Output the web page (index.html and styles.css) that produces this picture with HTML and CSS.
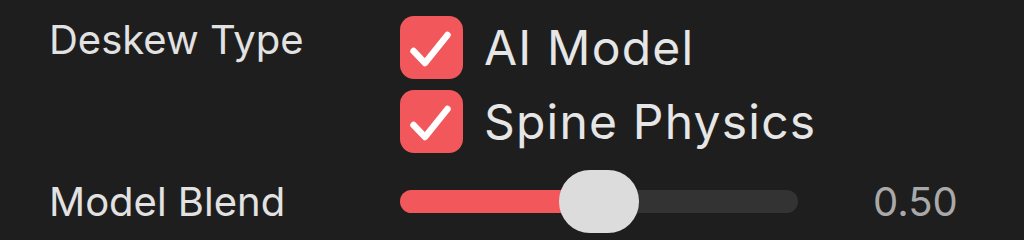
FILE: index.html
```html
<!DOCTYPE html>
<html>
<head>
<meta charset="utf-8">
<link rel="stylesheet" href="styles.css">
</head>
<body>
<div class="panel">
  <div class="row row-type">
    <div class="label">Deskew Type</div>
    <div class="checks">
      <label class="check">
        <span class="box"><svg viewBox="0 0 63 63" width="63" height="63"><path d="M13.5 35 L25 47 L47.5 19" fill="none" stroke="#fff" stroke-width="6.5" stroke-linecap="round" stroke-linejoin="round"/></svg></span>
        <span class="check-text">AI Model</span>
      </label>
      <label class="check">
        <span class="box"><svg viewBox="0 0 63 63" width="63" height="63"><path d="M13.5 35 L25 47 L47.5 19" fill="none" stroke="#fff" stroke-width="6.5" stroke-linecap="round" stroke-linejoin="round"/></svg></span>
        <span class="check-text">Spine Physics</span>
      </label>
    </div>
  </div>
  <div class="row row-blend">
    <div class="label">Model Blend</div>
    <div class="slider">
      <div class="track"><div class="fill" style="width:50%"></div></div>
      <div class="thumb" style="left:40%"></div>
    </div>
    <div class="value">0.50</div>
  </div>
</div>
</body>
</html>
```

FILE: styles.css
```css
html, body {
  margin: 0;
  padding: 0;
  background: #1e1e1e;
  width: 1024px;
  height: 240px;
  overflow: hidden;
}
.panel {
  font-family: Inter, "Liberation Sans", sans-serif;
  color: #e2e2e2;
  padding: 16px 0 0 49px;
  display: flex;
  flex-direction: column;
  gap: 17px;
}
.row {
  display: flex;
}
.label {
  width: 351px;
  flex: none;
  font-size: 40px;
  line-height: 1;
}
.row-type .label {
  padding-top: 4px;
}
.checks {
  display: flex;
  flex-direction: column;
  gap: 11px;
}
.check {
  display: flex;
  align-items: center;
  gap: 21px;
}
.box {
  width: 63px;
  height: 63px;
  border-radius: 14px;
  background: #f2575b;
  display: block;
}
.box svg { display: block; }
.check-text {
  font-size: 48px;
  line-height: 1;
  letter-spacing: 1.2px;
  color: #e6e6e6;
}
.row-blend {
  align-items: center;
}
.slider {
  position: relative;
  width: 398px;
  height: 63px;
  display: flex;
  align-items: center;
}
.track {
  width: 100%;
  height: 23px;
  border-radius: 12px;
  background: #333333;
  overflow: hidden;
}
.fill {
  height: 100%;
  background: #f2575b;
}
.thumb {
  position: absolute;
  top: 0;
  width: 80px;
  height: 63px;
  border-radius: 31px;
  background: #dcdcdc;
}
.value {
  margin-left: 75px;
  font-size: 40px;
  line-height: 1;
  color: #a9a9a9;
}
```
